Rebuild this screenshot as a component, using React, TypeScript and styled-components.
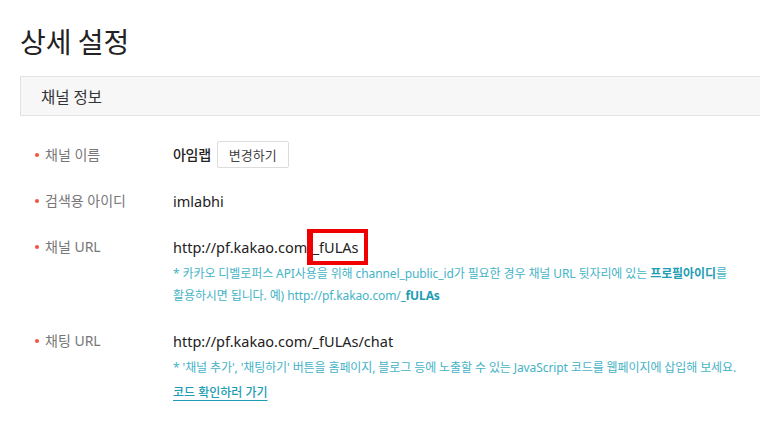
import React from "react";
import styled, { createGlobalStyle } from "styled-components";

const Global = createGlobalStyle`
  html, body { margin: 0; padding: 0; background: #fff; overflow: hidden; }
  body { font-family: "Noto Sans", "Noto Sans CJK KR", sans-serif; color: #222; }
`;

const Page = styled.div`
  width: 760px;
  height: 430px;
  overflow: hidden;
  padding: 21px 0 0 20px;
  box-sizing: border-box;
`;

const Title = styled.h1`
  margin: 0;
  font-family: "Noto Sans CJK KR", sans-serif;
  font-size: 28px;
  line-height: 40px;
  font-weight: 400;
  color: #222;
`;

const SectionHeader = styled.div`
  margin-top: 15px;
  width: 780px;
  height: 40px;
  box-sizing: border-box;
  background: #f7f7f7;
  border: 1px solid #e3e3e3;
  border-right: none;
  padding-left: 20px;
  display: flex;
  align-items: center;
  font-size: 15.5px;
  color: #333;
`;

const Row = styled.div<{ $top: number }>`
  margin-top: ${(p) => p.$top}px;
  display: flex;
  align-items: flex-start;
`;

const Label = styled.div<{ $lh: number }>`
  flex: none;
  width: 153px;
  padding-left: 15px;
  box-sizing: border-box;
  display: flex;
  align-items: center;
  gap: 6px;
  font-size: 14px;
  line-height: ${(p) => p.$lh}px;
  color: #777;
  &::before {
    content: "";
    width: 4px;
    height: 4px;
    border-radius: 50%;
    background: #f2533f;
    flex: none;
  }
`;

const Value = styled.div`
  display: flex;
  flex-direction: column;
`;

const ValueLine = styled.div`
  display: flex;
  align-items: center;
  gap: 6px;
  font-size: 14.5px;
  line-height: 20px;
  color: #222;
  white-space: nowrap;
`;

const Strong = styled.span`
  font-weight: 500;
  font-size: 14px;
  letter-spacing: -0.3px;
`;

const Button = styled.button`
  height: 27px;
  padding: 0 11px;
  background: #fff;
  border: 1px solid #dcdcdc;
  border-radius: 2px;
  font-family: "Noto Sans CJK KR", sans-serif;
  font-size: 13px;
  color: #444;
  cursor: pointer;
`;

const Marked = styled.span`
  position: relative;
  &::after {
    content: "";
    position: absolute;
    left: 0px;
    right: -10px;
    top: -8px;
    bottom: -8px;
    border: 4px solid #f00000;
    border-left-width: 6px;
  }
`;

const Help = styled.p<{ $top: number }>`
  margin: ${(p) => p.$top}px 0 0;
  font-size: 12px;
  line-height: 22px;
  letter-spacing: -0.1px;
  color: #45b3c6;
  white-space: nowrap;
`;

const HelpBold = styled.b`
  font-weight: 700;
  color: #1f9db2;
`;

const LinkText = styled.a`
  display: inline-block;
  margin-top: 3px;
  font-size: 12px;
  line-height: 22px;
  font-weight: 500;
  color: #1d9cb3;
  text-decoration: underline;
  text-underline-offset: 3px;
  cursor: pointer;
`;

export default function App() {
  return (
    <>
      <Global />
      <Page>
        <Title>상세 설정</Title>
        <SectionHeader>채널 정보</SectionHeader>

        <Row $top={25}>
          <Label $lh={27}>채널 이름</Label>
          <Value>
            <ValueLine style={{ height: 27 }}>
              <Strong>아임랩</Strong>
              <Button>변경하기</Button>
            </ValueLine>
          </Value>
        </Row>

        <Row $top={23}>
          <Label $lh={20}>검색용 아이디</Label>
          <Value>
            <ValueLine>imlabhi</ValueLine>
          </Value>
        </Row>

        <Row $top={26}>
          <Label $lh={20}>채널 URL</Label>
          <Value>
            <ValueLine>
              <span>
                http://pf.kakao.com<Marked>/_fULAs</Marked>
              </span>
            </ValueLine>
            <Help $top={6}>
              * 카카오 디벨로퍼스 API사용을 위해 channel_public_id가 필요한 경우 채널 URL 뒷자리에 있는{" "}
              <HelpBold>프로필아이디</HelpBold>를
              <br />
              활용하시면 됩니다. 예) http://pf.kakao.com/<HelpBold>_fULAs</HelpBold>
            </Help>
          </Value>
        </Row>

        <Row $top={24}>
          <Label $lh={20}>채팅 URL</Label>
          <Value>
            <ValueLine>http://pf.kakao.com/_fULAs/chat</ValueLine>
            <Help $top={6}>
              * '채널 추가', '채팅하기' 버튼을 홈페이지, 블로그 등에 노출할 수 있는 JavaScript 코드를 웹페이지에 삽입해 보세요.
            </Help>
            <div>
              <LinkText>코드 확인하러 가기</LinkText>
            </div>
          </Value>
        </Row>
      </Page>
    </>
  );
}
